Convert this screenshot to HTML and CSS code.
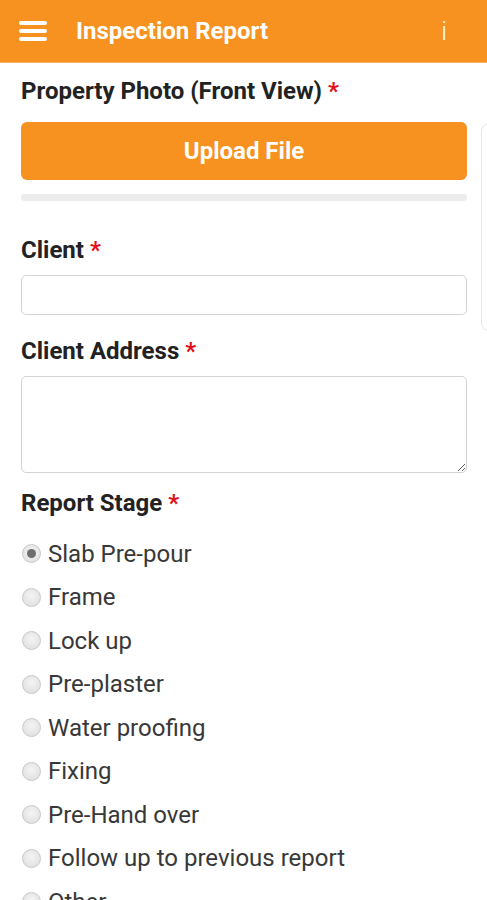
FILE: index.html
```html
<!DOCTYPE html>
<html lang="en">
<head>
<meta charset="utf-8">
<title>Inspection Report</title>
<link rel="stylesheet" href="styles.css">
</head>
<body>
<header class="appbar">
  <svg class="menu-icon" width="28" height="22" viewBox="0 0 28 22">
    <rect x="0" y="1" width="28" height="4" rx="2" fill="#fff"/>
    <rect x="0" y="9" width="28" height="4" rx="2" fill="#fff"/>
    <rect x="0" y="17" width="28" height="4" rx="2" fill="#fff"/>
  </svg>
  <h1 class="title">Inspection Report</h1>
  <span class="info">i</span>
</header>
<main class="content">
  <div class="side-panel"></div>
  <form class="form">
    <div class="field field-photo">
      <label class="label">Property Photo (Front View) <span class="req">*</span></label>
      <button type="button" class="upload">Upload File</button>
      <div class="progress"></div>
    </div>
    <div class="field field-client">
      <label class="label">Client <span class="req">*</span></label>
      <input class="input" type="text">
    </div>
    <div class="field field-address">
      <label class="label">Client Address <span class="req">*</span></label>
      <textarea class="textarea"></textarea>
    </div>
    <div class="field field-stage">
      <label class="label">Report Stage <span class="req">*</span></label>
      <ul class="radios">
        <li class="radio checked"><span class="dot"></span>Slab Pre-pour</li>
        <li class="radio"><span class="dot"></span>Frame</li>
        <li class="radio"><span class="dot"></span>Lock up</li>
        <li class="radio"><span class="dot"></span>Pre-plaster</li>
        <li class="radio"><span class="dot"></span>Water proofing</li>
        <li class="radio"><span class="dot"></span>Fixing</li>
        <li class="radio"><span class="dot"></span>Pre-Hand over</li>
        <li class="radio"><span class="dot"></span>Follow up to previous report</li>
        <li class="radio"><span class="dot"></span>Other</li>
      </ul>
    </div>
  </form>
</main>
</body>
</html>
```
FILE: styles.css
```css
* { box-sizing: border-box; }
html, body { margin: 0; padding: 0; }
body {
  font-family: Roboto, "Liberation Sans", Arial, sans-serif;
  background: #fff;
  color: #1e1e1e;
  width: 487px;
  height: 900px;
  overflow: hidden;
}
.appbar {
  height: 63px;
  background: #f7911f;
  display: flex;
  align-items: center;
  padding: 0 19px;
  border-bottom: 1px solid #f9b36a;
}
.menu-icon { flex: none; }
.title {
  margin: 0 0 0 29px;
  font-size: 24px;
  font-weight: 700;
  color: #fff;
  flex: 1;
}
.info {
  color: #fff;
  font-size: 26px;
  font-weight: 300;
  margin-right: 21px;
}
.content {
  position: relative;
  padding: 14px 20px 0 21px;
}
.side-panel {
  position: absolute;
  left: 481px;
  top: 60px;
  width: 30px;
  height: 208px;
  border: 1px solid #e6e6e6;
  border-radius: 8px;
}
.form { display: flex; flex-direction: column; }
.field { display: flex; flex-direction: column; }
.field-client { margin-top: 35px; }
.field-address { margin-top: 22px; }
.field-stage { margin-top: 16px; }
.label {
  font-size: 24px;
  font-weight: 700;
  color: #222;
  line-height: 28px;
}
.req { color: #e3101a; }
.upload {
  margin-top: 17px;
  height: 58px;
  width: 446px;
  background: #f7911f;
  border: none;
  border-radius: 6px;
  color: #fff;
  font-family: inherit;
  font-size: 24px;
  font-weight: 700;
}
.progress {
  margin-top: 14px;
  height: 7px;
  width: 446px;
  background: #ececec;
  border-radius: 4px;
}
.input {
  margin-top: 11px;
  width: 446px;
  height: 40px;
  border: 1px solid #d4d4d4;
  border-radius: 5px;
}
.textarea {
  margin-top: 11px;
  width: 446px;
  height: 97px;
  border: 1px solid #d4d4d4;
  border-radius: 5px;
  resize: vertical;
  display: block;
}
.radios {
  list-style: none;
  margin: 15px 0 0;
  padding: 0;
  display: flex;
  flex-direction: column;
}
.radio {
  height: 43.5px;
  display: flex;
  align-items: center;
  font-size: 24px;
  color: #383838;
}
.dot {
  width: 19px;
  height: 19px;
  border-radius: 50%;
  border: 1px solid #c8c8c8;
  background: radial-gradient(circle at 50% 40%, #f4f4f4, #dcdcdc);
  margin: 0 7px 0 1px;
  flex: none;
  position: relative;
}
.checked .dot::after {
  content: "";
  position: absolute;
  left: 4px; top: 4px;
  width: 9px; height: 9px;
  border-radius: 50%;
  background: #6e6e6e;
}
```
